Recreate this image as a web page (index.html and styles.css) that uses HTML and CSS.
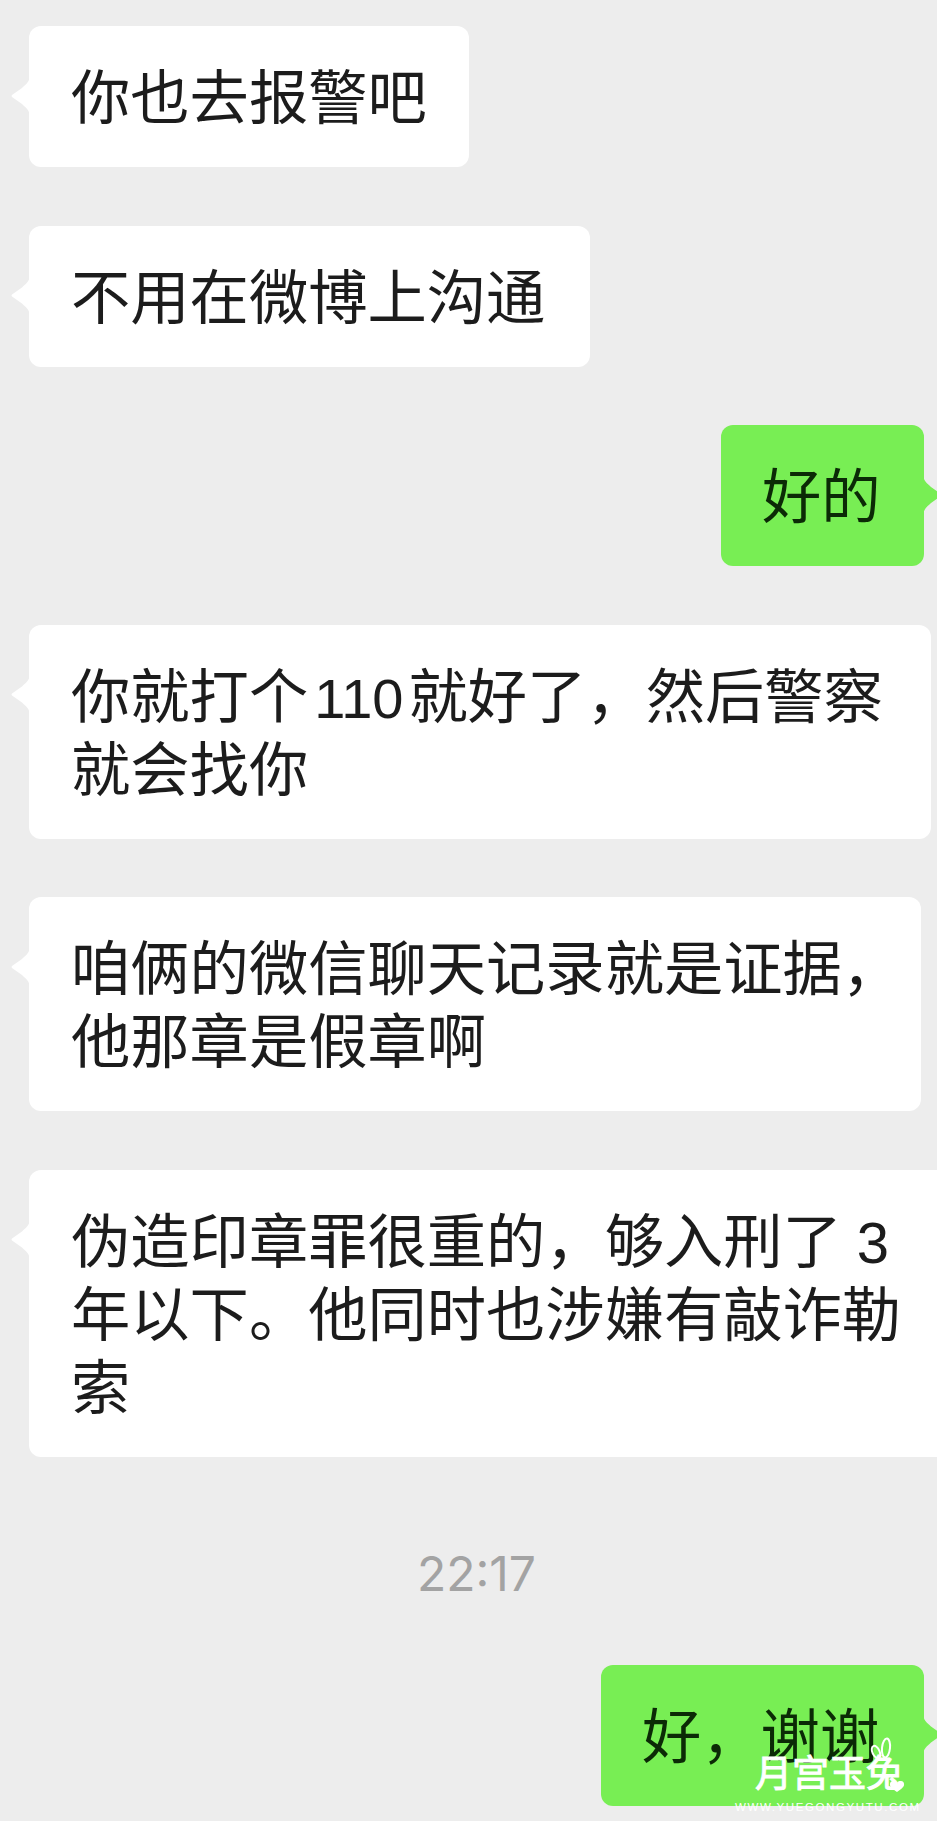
FILE: index.html
```html
<!DOCTYPE html>
<html lang="zh-CN">
<head>
    <meta charset="UTF-8">
    <meta name="viewport" content="width=device-width, initial-scale=1.0">
    <title>聊天记录</title>
    <link rel="stylesheet" href="styles.css">
</head>
<body>
    <div class="chat">
        <div class="msg them w-440">你也去报警吧</div>
        <div class="msg them w-561">不用在微博上沟通</div>
        <div class="msg me w-203">好的</div>
        <div class="msg them w-902">你就打个<span class="num">110</span>就好了，然后警察<br>就会找你</div>
        <div class="msg them w-892">咱俩的微信聊天记录就是证据，<br>他那章是假章啊</div>
        <div class="msg them wide">伪造印章罪很重的，够入刑了<span class="num num-end">3</span><br>年以下。他同时也涉嫌有敲诈勒<br>索</div>
        <div class="time">22:17</div>
        <div class="msg me w-323">好，谢谢</div>
    </div>

    <!-- Site mark in the bottom corner -->
    <div class="mark">
        <svg class="mark-ears" width="24" height="24" viewBox="0 0 24 24">
            <ellipse cx="6" cy="15" rx="3.6" ry="6.5" transform="rotate(-24 6 15)"/>
            <ellipse cx="16" cy="11" rx="4" ry="9.5" transform="rotate(6 16 11)"/>
        </svg>
        <svg class="mark-heart" width="16" height="12" viewBox="0 0 16 12">
            <path d="M8 11C4 8 1 6 1 4a3 3 0 0 1 7-1 3 3 0 0 1 7 1c0 2-3 4-7 7z"/>
        </svg>
        <div class="mark-name">月宫玉兔</div>
        <div class="mark-url">WWW.YUEGONGYUTU.COM</div>
    </div>
</body>
</html>
```

FILE: styles.css
```css
/* Chat page */
html, body {
    margin: 0;
    padding: 0;
}

body {
    position: relative;
    width: 937px;
    height: 1821px;
    overflow: hidden;
    background-color: #ededed;
    font-family: "Noto Sans CJK SC", "Liberation Sans", sans-serif;
}

.chat {
    display: flex;
    flex-direction: column;
    align-items: flex-start;
    gap: 58.5px;
    padding: 26px 13px 0 29px;
}

.msg {
    position: relative;
    box-sizing: border-box;
    padding: 31px 0 37px 42px;
    border-radius: 12px;
    font-size: 59.3px;
    line-height: 73px;
    white-space: nowrap;
    color: #1c1c1c;
}

.msg::before {
    content: "";
    position: absolute;
    top: 48px;
    width: 19px;
    height: 44px;
    background-color: inherit;
}

.num {
    margin: 0 5px 0 6px;
    font-family: "Liberation Sans", sans-serif;
    font-size: 56px;
    line-height: 1;
}

.num-end {
    margin: 0 0 0 15px;
    font-size: 58px;
}

.them {
    background-color: #fff;
}

.them::before {
    left: -18px;
    clip-path: path("M19 0C19 8 15 10 11 14L1 21Q0 22 1 23L11 30C15 34 19 36 19 44Z");
}

.w-440 { width: 440px; }
.w-561 { width: 561px; }
.w-902 { width: 902px; }
.w-892 { width: 892px; }
.w-203 { width: 203px; }
.w-323 { width: 323px; }

.wide {
    width: 940px;
}

.me {
    align-self: flex-end;
    padding-left: 41px;
    background-color: #78ee54;
    color: #0b2a06;
}

.me::before {
    right: -18px;
    clip-path: path("M0 0C0 8 4 10 8 14L18 21Q19 22 18 23L8 30C4 34 0 36 0 44Z");
}

.time {
    align-self: center;
    margin: 32px 0 5px;
    font-family: "Inter", "Liberation Sans", sans-serif;
    font-size: 48px;
    line-height: 54px;
    color: #a3a3a3;
}

/* Site mark */
.mark {
    position: absolute;
    left: 735px;
    top: 1736px;
    width: 202px;
    color: #fff;
}

.mark-name {
    margin: 12px 0 0 20px;
    font-size: 37px;
    line-height: 46px;
    white-space: nowrap;
    -webkit-text-stroke: 1px #fff;
}

.mark-url {
    margin-top: 6px;
    font-family: "Liberation Sans", sans-serif;
    font-size: 11.5px;
    line-height: 14px;
    letter-spacing: 1.6px;
    white-space: nowrap;
    color: #fff;
}

.mark-ears {
    position: absolute;
    left: 135px;
    top: 1px;
    fill: none;
    stroke: #fff;
    stroke-width: 2;
}

.mark-heart {
    position: absolute;
    left: 154px;
    top: 45px;
    fill: #fff;
}
```
